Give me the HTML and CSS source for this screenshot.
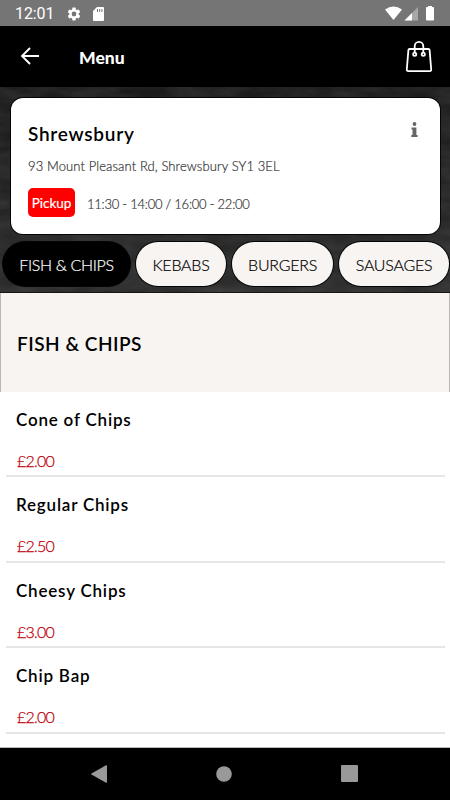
FILE: index.html
```html
<!DOCTYPE html>
<html lang="en">
<head>
<meta charset="utf-8">
<title>Menu</title>
<link rel="stylesheet" href="styles.css">
</head>
<body>
<div class="screen">
  <div class="status">
    <span class="clock">12:01</span>
    <svg class="gear" width="16" height="16" viewBox="0 0 24 24"><path fill="#fff" d="M19.14 12.94c.04-.3.06-.61.06-.94s-.02-.64-.07-.94l2.03-1.58a.49.49 0 0 0 .12-.61l-1.92-3.32a.49.49 0 0 0-.59-.22l-2.39.96c-.5-.38-1.03-.7-1.62-.94l-.36-2.54A.48.48 0 0 0 13.920 2.400h-3.84c-.24 0-.43.17-.47.41l-.36 2.54c-.59.24-1.130.57-1.620.94l-2.390-.96a.48.48 0 0 0-.59.22L2.740 8.870a.48.48 0 0 0 .12.61l2.030 1.580c-.05.3-.09.63-.09.94s.02.64.07.94l-2.030 1.580a.49.49 0 0 0-.12.61l1.920 3.320c.12.22.37.29.59.22l2.390-.96c.5.38 1.030.7 1.620.94l.36 2.540c.05.24.24.41.48.41h3.840c.24 0 .44-.17.47-.41l.36-2.540c.59-.24 1.130-.56 1.620-.94l2.390.96c.22.08.47 0 .59-.22l1.920-3.320a.48.48 0 0 0-.12-.61zM12 15.600a3.600 3.600 0 1 1 0-7.200 3.600 3.600 0 0 1 0 7.200z"/></svg>
    <svg class="sd" width="11" height="14" viewBox="0 0 11 14"><path fill="#fff" d="M4 0h6a1 1 0 0 1 1 1v12a1 1 0 0 1-1 1H1a1 1 0 0 1-1-1V4z"/><path stroke="#757575" stroke-width="1" d="M4.500 2v3M6.700 2v3M8.900 2v3"/></svg>
    <svg class="signals" width="50" height="15" viewBox="0 0 50 15"><path fill="#fff" d="M0 3.500Q8.500-2.500 17 3.500L8.500 14z"/><path fill="#a8a8a8" d="M33 1v13.500H19.500z"/><path fill="#fff" d="M27 7v7.500h-7.500z"/><path fill="#fff" d="M43 1V0h4v1h1.200a.8.8 0 0 1 .8.8v12a.8.8 0 0 1-.8.8h-6.400a.8.8 0 0 1-.8-.8v-12a.8.8 0 0 1 .8-.8z"/></svg>
  </div>
  <header class="bar">
    <svg class="back" width="20" height="18" viewBox="0 0 20 18"><path fill="none" stroke="#fff" stroke-width="1.900" d="M19 9H2M10 1L2 9l8 8"/></svg>
    <h1>Menu</h1>
    <svg class="bag" width="28" height="33" viewBox="0 0 28 33"><g fill="none" stroke="#fff" stroke-width="1.800"><path d="M4.600 9h18.800c.7 0 1.100.4 1.200 1l1.600 19.500c.1 1-.5 1.700-1.400 1.700H3.200c-.9 0-1.500-.7-1.400-1.700L3.400 10c.1-.6.500-1 1.200-1z"/><path d="M9.700 13V6.200a4.300 4.300 0 0 1 8.600 0V13"/><circle cx="9.700" cy="14.300" r="1.600"/><circle cx="18.300" cy="14.300" r="1.600"/></g></svg>
  </header>
  <section class="hero">
    <svg class="slate" width="450" height="205" preserveAspectRatio="none">
      <filter id="grain" x="0" y="0" width="100%" height="100%"><feTurbulence type="fractalNoise" baseFrequency="0.03 0.09" numOctaves="5" seed="12"/><feColorMatrix values="0 0 0 0 .6  0 0 0 0 .6  0 0 0 0 .6  .9 0 0 0 -.2"/></filter>
      <rect width="450" height="205" filter="url(#grain)"/>
    </svg>
    <div class="card">
      <div class="title"><h2>Shrewsbury</h2>
        <svg class="info" width="7" height="15" viewBox="0 0 7 15"><path fill="#666" d="M.5 5.500h4.900v7.400h1.200V15H.3v-2.100h1.200V7.600H.5z"/><circle cx="3.500" cy="2" r="1.900" fill="#666"/></svg>
      </div>
      <p class="address">93 Mount Pleasant Rd, Shrewsbury SY1 3EL</p>
      <div class="hours"><span class="pickup">Pickup</span><span class="times">11:30 - 14:00 / 16:00 - 22:00</span></div>
    </div>
    <nav class="tabs">
      <a class="tab active">FISH &amp; CHIPS</a>
      <a class="tab kebabs">KEBABS</a>
      <a class="tab burgers">BURGERS</a>
      <a class="tab sausages">SAUSAGES</a>
    </nav>
  </section>
  <div class="section"><h3>FISH &amp; CHIPS</h3></div>
  <main class="list">
    <article class="item"><h4>Cone of Chips</h4><p>£2.00</p></article>
    <article class="item"><h4>Regular Chips</h4><p>£2.50</p></article>
    <article class="item"><h4>Cheesy Chips</h4><p>£3.00</p></article>
    <article class="item"><h4>Chip Bap</h4><p>£2.00</p></article>
  </main>
  <footer class="nav">
    <svg width="16" height="18" viewBox="0 0 16 18"><path fill="#999" d="M15 .3Q16 0 16 1v16q0 1-1 .7L.5 9.500q-.7-.5 0-1z"/></svg>
    <svg width="16" height="16" viewBox="0 0 16 16"><circle cx="8" cy="8" r="7.800" fill="#999"/></svg>
    <svg width="17" height="17" viewBox="0 0 17 17"><rect width="17" height="17" rx="1" fill="#999"/></svg>
  </footer>
</div>
</body>
</html>
```
FILE: styles.css
```css
* { box-sizing: border-box; }
body { margin: 0; font-family: Lato, "Liberation Sans", sans-serif; color: #000; background: #fff; }
h1, h2, h3, h4, p { margin: 0; white-space: nowrap; }
svg { display: block; flex: none; }
.screen { width: 450px; height: 800px; display: flex; flex-direction: column; overflow: hidden; }
.status { height: 26px; flex: none; background: #757575; display: flex; align-items: center; padding: 1px 15px 0 15px; }
.clock { font: 400 16px/24px Roboto, sans-serif; color: #fff; width: 51px; letter-spacing: -.1px; }
.sd { margin-left: 11px; }
.signals { margin-left: auto; }
.bar { height: 61px; flex: none; background: #000; color: #fff; display: flex; align-items: center; padding: 0 17px 0 20px; }
.back { margin-bottom: 1px; }
.bar h1 { font-size: 17.500px; line-height: 24px; font-weight: 900; margin: 2px 0 0 39px; }
.bag { margin-left: auto; margin-bottom: 1px; }
.hero { height: 206px; flex: none; position: relative; background: linear-gradient(#1b1b1b, #2b2b2b); border-bottom: 1px solid #161616; padding-top: 11px; }
.slate { position: absolute; left: 0; top: 0; opacity: .18; }
.card { position: relative; margin: 0 10px 0 11px; height: 136px; background: #fff; border-radius: 12px; box-shadow: 0 0 0 1px #050505; padding: 24px 22px 0 17px; }
.title { display: flex; justify-content: space-between; height: 24px; }
.info { margin-top: 0; }
.title h2 { font-size: 19px; line-height: 24px; font-weight: 600; letter-spacing: .75px; }
.address { margin-top: 11px; font-size: 13px; line-height: 18px; color: #333; font-weight: 300; letter-spacing: .11px; -webkit-text-stroke: .2px #333; }
.hours { margin-top: 13px; display: flex; height: 29px; }
.pickup { width: 47px; height: 29px; border-radius: 5px; background: #f00; color: #fff; text-align: center; font-size: 13.500px; line-height: 30px; -webkit-text-stroke: .2px #fff; }
.times { margin-left: 12px; font-size: 13px; line-height: 33px; font-weight: 300; color: #333; white-space: nowrap; letter-spacing: -.24px; -webkit-text-stroke: .2px #333; }
.tabs { position: relative; display: flex; gap: 6px; margin: 8px 0 0 3px; width: 447px; }
.tab { height: 44px; line-height: 45px; border-radius: 22px; flex: none; width: 127px; background: #f8f4f1; text-align: center; font-size: 16px; font-weight: 300; box-shadow: 0 0 0 1px #050505; white-space: nowrap; letter-spacing: -.25px; -webkit-text-stroke: .2px currentColor; }
.active { background: #000; color: #fff; letter-spacing: -.35px; }
.kebabs { width: 90px; }
.burgers { width: 101px; }
.sausages { width: 110px; }
.section { height: 99px; flex: none; background: #f8f4f1; border: solid #b9b6b4; border-width: 0 1px; padding: 39px 0 0 16px; }
.section h3 { font-size: 19px; line-height: 24px; font-weight: 600; letter-spacing: .5px; }
.list { height: 356px; flex: none; border-bottom: 1px solid #bbb; padding: 0 5px 0 6px; }
.item { height: 85.500px; border-bottom: 2px solid #e6e6e6; padding: 16px 0 0 10px; }
.item h4 { font-size: 17px; line-height: 24px; font-weight: 600; letter-spacing: .8px; }
.item p { margin: 19px 0 0 1px; font-size: 16px; line-height: 20px; font-weight: 300; letter-spacing: -.75px; color: #c00008; -webkit-text-stroke: .25px #c00008; }
.item:first-child { height: 85px; }
.nav { flex: 1; background: #000; display: flex; align-items: center; justify-content: space-between; padding: 0 92px 1px 91px; }
```
